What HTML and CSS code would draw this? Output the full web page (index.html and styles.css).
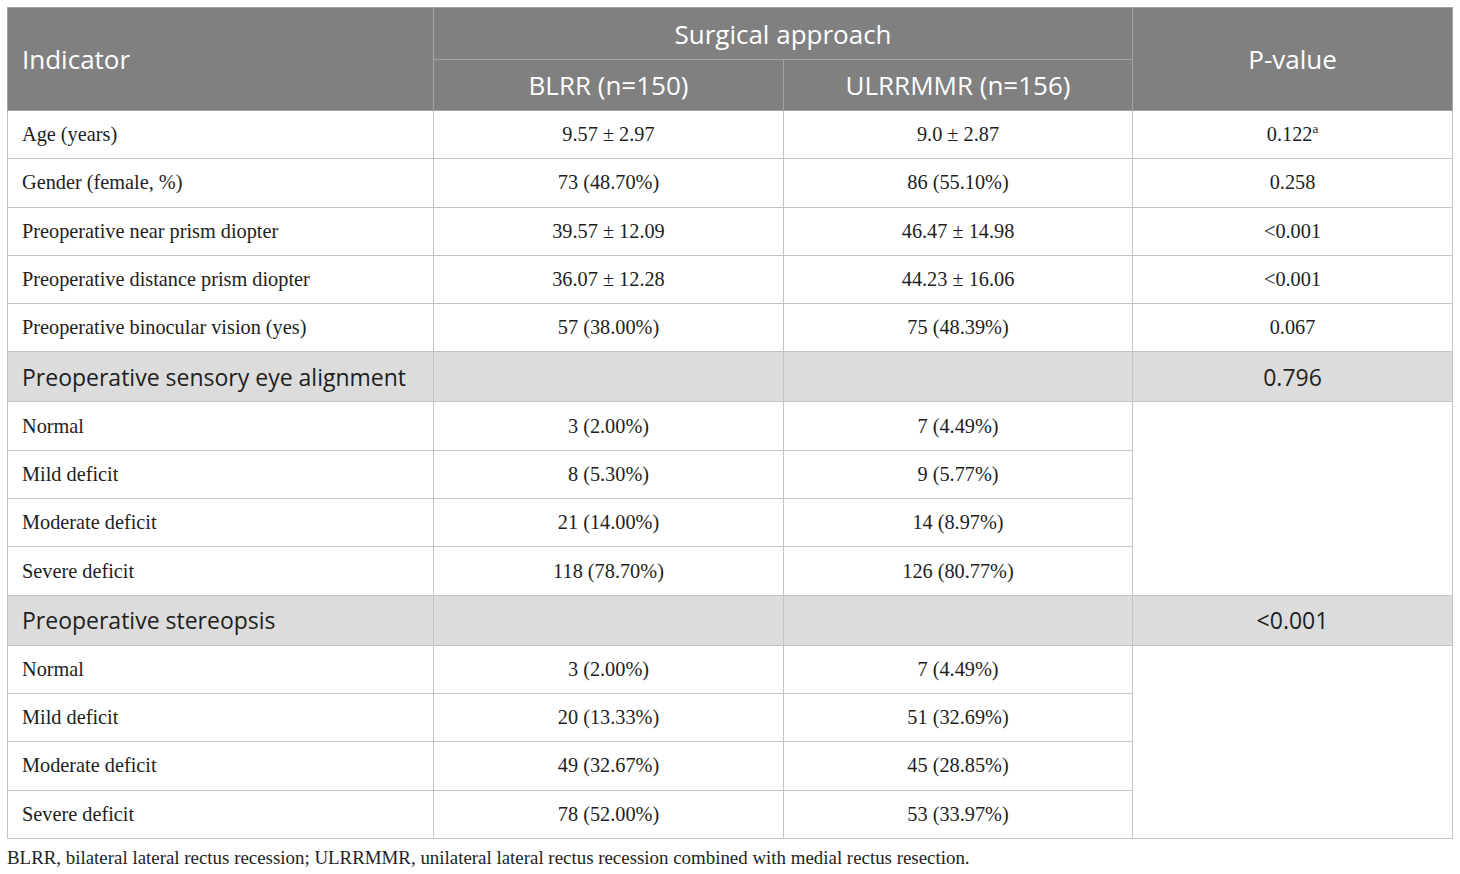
FILE: index.html
```html
<!DOCTYPE html>
<html>
<head>
<meta charset="utf-8">
<link rel="stylesheet" href="styles.css">
</head>
<body>
<div class="wrap">
<table class="tbl">
  <colgroup>
    <col class="c1"><col class="c2"><col class="c3"><col class="c4">
  </colgroup>
  <thead>
    <tr class="h1">
      <th rowspan="2" class="left">Indicator</th>
      <th colspan="2">Surgical approach</th>
      <th rowspan="2">P-value</th>
    </tr>
    <tr class="h2">
      <th>BLRR (n=150)</th>
      <th>ULRRMMR (n=156)</th>
    </tr>
  </thead>
  <tbody>
    <tr><td class="left">Age (years)</td><td>9.57 ± 2.97</td><td>9.0 ± 2.87</td><td>0.122<sup>a</sup></td></tr>
    <tr><td class="left">Gender (female, %)</td><td>73 (48.70%)</td><td>86 (55.10%)</td><td>0.258</td></tr>
    <tr><td class="left">Preoperative near prism diopter</td><td>39.57 ± 12.09</td><td>46.47 ± 14.98</td><td>&lt;0.001</td></tr>
    <tr><td class="left">Preoperative distance prism diopter</td><td>36.07 ± 12.28</td><td>44.23 ± 16.06</td><td>&lt;0.001</td></tr>
    <tr><td class="left">Preoperative binocular vision (yes)</td><td>57 (38.00%)</td><td>75 (48.39%)</td><td>0.067</td></tr>
    <tr class="sec"><td class="left">Preoperative sensory eye alignment</td><td></td><td></td><td>0.796</td></tr>
    <tr><td class="left">Normal</td><td>3 (2.00%)</td><td>7 (4.49%)</td><td rowspan="4"></td></tr>
    <tr><td class="left">Mild deficit</td><td>8 (5.30%)</td><td>9 (5.77%)</td></tr>
    <tr><td class="left">Moderate deficit</td><td>21 (14.00%)</td><td>14 (8.97%)</td></tr>
    <tr><td class="left">Severe deficit</td><td>118 (78.70%)</td><td>126 (80.77%)</td></tr>
    <tr class="sec"><td class="left">Preoperative stereopsis</td><td></td><td></td><td>&lt;0.001</td></tr>
    <tr><td class="left">Normal</td><td>3 (2.00%)</td><td>7 (4.49%)</td><td rowspan="4"></td></tr>
    <tr><td class="left">Mild deficit</td><td>20 (13.33%)</td><td>51 (32.69%)</td></tr>
    <tr><td class="left">Moderate deficit</td><td>49 (32.67%)</td><td>45 (28.85%)</td></tr>
    <tr><td class="left">Severe deficit</td><td>78 (52.00%)</td><td>53 (33.97%)</td></tr>
  </tbody>
</table>
<p class="note">BLRR, bilateral lateral rectus recession; ULRRMMR, unilateral lateral rectus recession combined with medial rectus resection.</p>
</div>
</body>
</html>
```
FILE: styles.css
```css
html, body {
  margin: 0;
  padding: 0;
  background: #ffffff;
}
.wrap {
  padding: 7px 7px 0 7px;
}
.tbl {
  width: 1445px;
  border-collapse: collapse;
  table-layout: fixed;
  font-family: "Liberation Serif", "Times New Roman", serif;
  font-size: 20.3px;
  color: #1e1e1e;
}
.c1 { width: 426px; }
.c2 { width: 350px; }
.c3 { width: 349px; }
.c4 { width: 320px; }
.tbl th, .tbl td {
  border: 1px solid #c4c4c4;
  text-align: center;
  padding: 0 14px;
}
.tbl thead th {
  background: #7f807f;
  color: #ffffff;
  font-family: "Open Sans", "Noto Sans", sans-serif;
  font-weight: 400;
  font-size: 26px;
  border-color: #a3a4a3;
}
.tbl thead th.left { text-align: left; }
.h1 th { height: 51px; }
.h2 th { height: 50px; }
.tbl tbody td { height: 47.3px; }
.tbl td.left { text-align: left; }
.tbl sup {
  font-size: 13px;
  vertical-align: 8px;
  line-height: 0;
}
.sec td {
  background: #dcdcdc;
  font-family: "Open Sans", "Noto Sans", sans-serif;
  font-size: 23px;
  height: 49px !important;
}
.note {
  margin: 8px 0 0 0;
  font-family: "Liberation Serif", "Times New Roman", serif;
  font-size: 18.9px;
  color: #1e1e1e;
}
```
